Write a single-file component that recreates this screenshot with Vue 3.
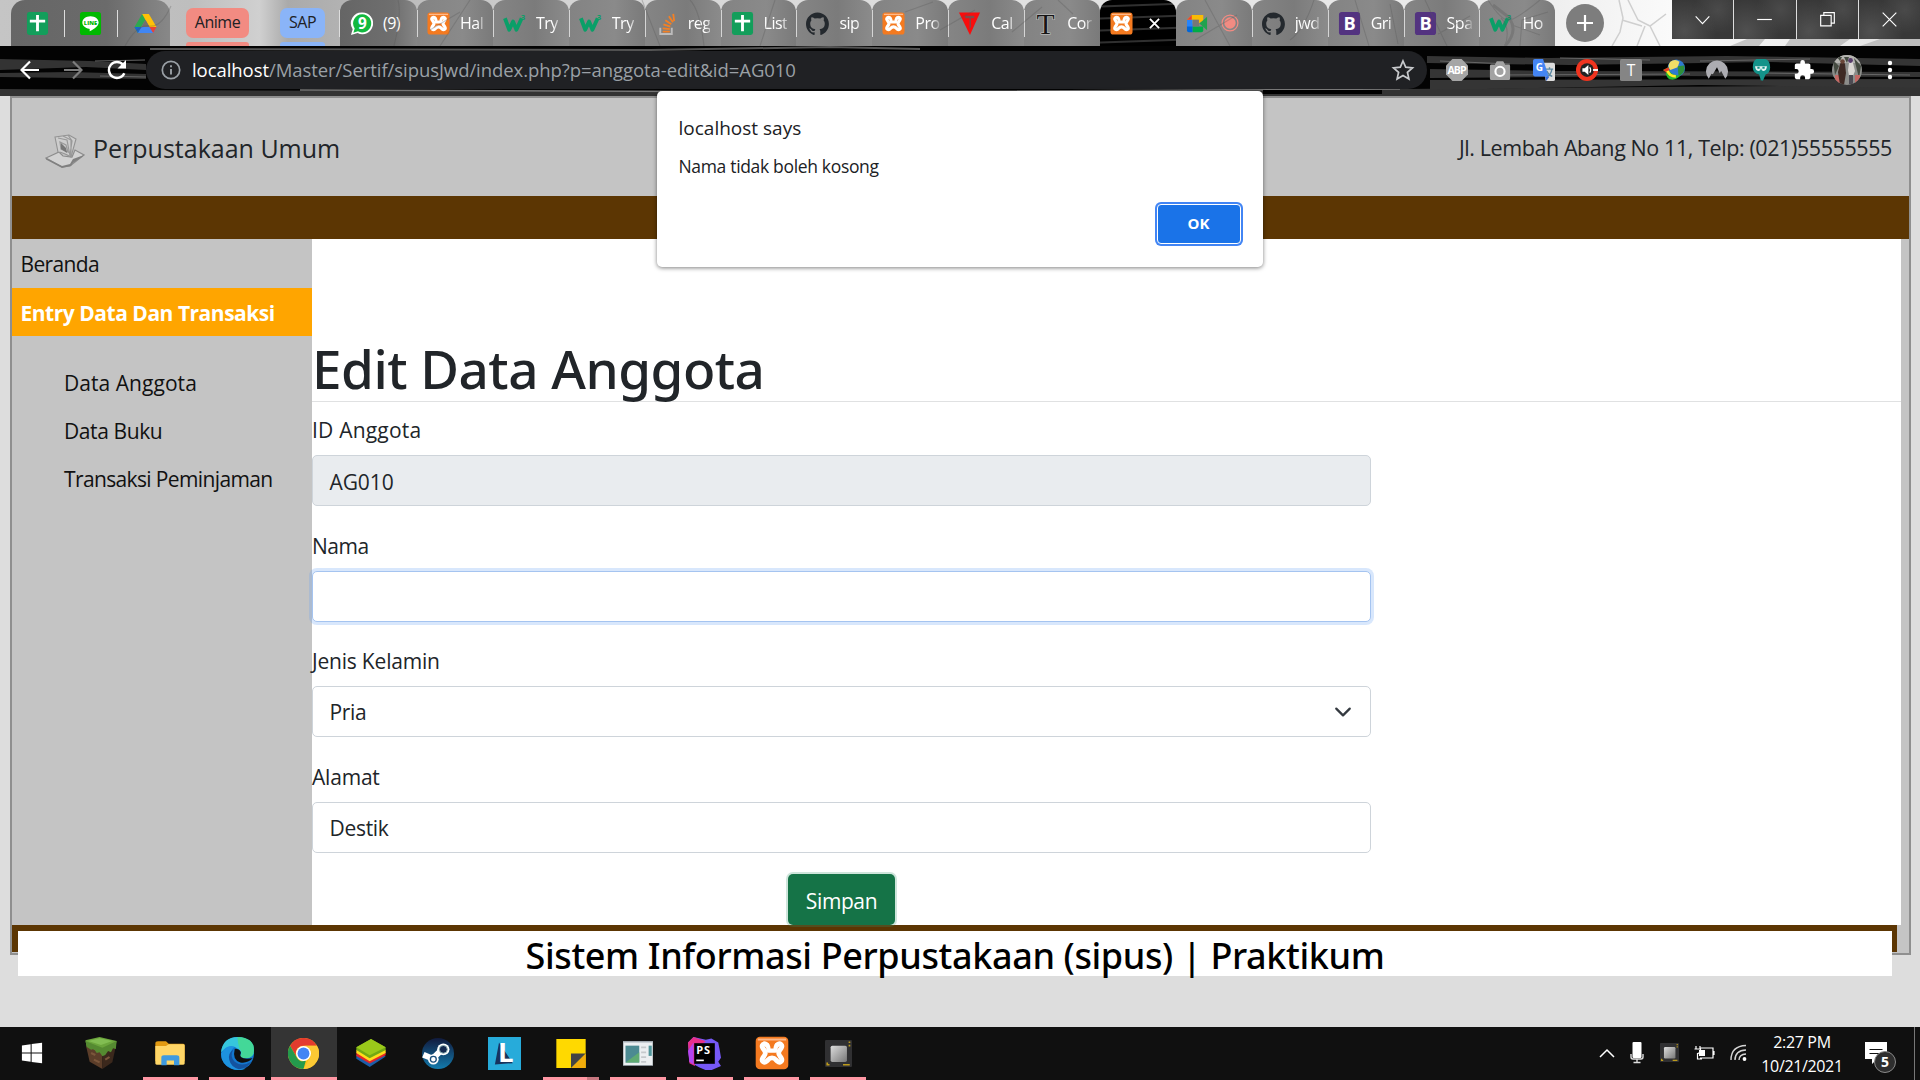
<script setup>
const xampp = '<rect x="0.5" y="0.5" width="23" height="23" rx="3" fill="#f47a20"/><path d="M2 2.5h20" stroke="#ffb98a" stroke-width="1.4"/><path d="M8.3 6.2c-2-1.6-4 .2-2.9 2.2.7 1.3 1.9 2.1 1.9 3.6s-1.200 2.300-1.900 3.600c-1.100 2 .9 3.800 2.900 2.200 1-.8 1.400-2.300 3.700-2.300s2.700 1.500 3.700 2.300c2 1.600 4-.2 2.900-2.200-.7-1.300-1.900-2.100-1.900-3.600s1.200-2.300 1.900-3.600c1.100-2-.9-3.800-2.900-2.200" fill="none" stroke="#fff" stroke-width="3.400" stroke-linecap="round"/><path d="M8.300 6.200c.9.700 1.300 2.600 1.200 4.200h5c-.1-1.600.3-3.500 1.200-4.200" fill="none" stroke="#fff" stroke-width="3" stroke-linecap="round" stroke-linejoin="round"/>'
const sheet = '<rect x="1" y="0" width="22" height="24" rx="2.500" fill="#139e5b"/><path d="M12 3v17M4 9.500h16" stroke="#fff" stroke-width="3"/>'
const w3 = '<path d="M2 6.500l4.500 12 4-8.500 3.500 8.500 5.500-12" fill="none" stroke="#0a9f68" stroke-width="4" stroke-linejoin="round"/><text x="18.500" y="8" font-size="8" font-weight="700" font-family="Open Sans" fill="#0a9f68">3</text>'
const github = '<path fill="#24292e" d="M12 .5C5.400.5 0 5.900 0 12.600c0 5.300 3.400 9.800 8.200 11.400.6.100.8-.3.8-.6v-2.200c-3.300.7-4-1.400-4-1.400-.6-1.400-1.300-1.800-1.300-1.800-1.100-.7.100-.7.100-.7 1.200.1 1.800 1.200 1.800 1.200 1.100 1.900 2.800 1.300 3.500 1 .1-.8.400-1.300.8-1.600-2.700-.3-5.500-1.300-5.500-5.900 0-1.300.5-2.400 1.200-3.200-.1-.3-.5-1.500.1-3.200 0 0 1-.3 3.300 1.200a11.500 11.500 0 0 1 6 0c2.300-1.500 3.300-1.200 3.300-1.200.7 1.700.2 2.900.1 3.200.8.800 1.200 1.900 1.200 3.200 0 4.600-2.800 5.600-5.500 5.900.4.400.8 1.100.8 2.200v3.300c0 .3.200.7.8.6 4.800-1.600 8.200-6.100 8.200-11.400C24 5.900 18.600.5 12 .5z"/>'
const boot = '<rect x="1" y="0" width="22" height="24" rx="3" fill="#533380"/><text x="12" y="19" text-anchor="middle" font-size="19" font-weight="700" font-family="Open Sans" fill="#fff">B</text>'
const icons = {
  xampp, sheet, w3, github, boot,
  line: '<rect x="1" y="0" width="22" height="24" rx="3" fill="#00b900"/><path d="M12 4.500c-4.800 0-8.500 2.900-8.500 6.500 0 3.300 3 6 7.100 6.400.9.200.6 1.200.5 2.800 2.700-1.300 9.400-5 9.400-9.200 0-3.600-3.700-6.500-8.500-6.500z" fill="#fff"/><text x="12" y="13.200" text-anchor="middle" font-size="6" font-weight="800" font-family="Open Sans" fill="#00b900">LINE</text>',
  drive: '<path d="M8.500 2h7l-8 13.500L4 22 .5 15.700z" fill="#2da94f"/><path d="M8.500 2h7L23.500 15.700h-7.500z" fill="#ffc107"/><path d="M7.800 15.700h15.700L20 22H4z" fill="#4086f4"/><path d="M16 15.700h7.500L20 22z" fill="#ea4335"/><path d="M.5 15.700h7.300L4 22z" fill="#1967d2"/><path d="M12 8l-4.300 7.700H16.300z" fill="#707070"/>',
  wa: '<path d="M13 .5a11 11.300 0 1 1-5 21.300L1 24l1.800-6A11.300 11.300 0 0 1 13 .5z" fill="#fff"/><path d="M13 2.300a9.300 9.500 0 1 1-4.700 17.800l-4.800 1.500 1.400-4.500A9.500 9.500 0 0 1 13 2.300z" fill="#12b93f"/><text x="13" y="18" text-anchor="middle" font-size="16" font-weight="700" font-family="Open Sans" fill="#fff">9</text>',
  stack: '<path d="M5.500 16.500v6.500h12v-6.500" fill="none" stroke="#bcbbbb" stroke-width="2"/><path d="M8 20.500h7.500M8 17l7.500.8M8.800 13l7.200 2.200M10.800 8.500l6.200 4.300M14.500 4.500l4.200 6.300M19 2l1 7.500" stroke="#f48024" stroke-width="1.900"/>',
  vee: '<path d="M1 .5h22L12.500 24z" fill="#f80d0d"/><path d="M7.500 4h9.500v2.500h-3.500v9l-1.500 3V6.500H7.500z" fill="#804a4a"/>',
  tee: '<text x="12" y="22.500" text-anchor="middle" font-size="31" font-weight="400" font-family="Liberation Serif" fill="#151515" stroke="#c9c9c9" stroke-width="1.200" paint-order="stroke">T</text>',
  meet: '<path d="M6 3h12v6l-5 3H1V8z" fill="#f9bb06"/><path d="M1 8h6v8H1z" fill="#2684fc"/><path d="M1 15h6v6H3q-2 0-2-2z" fill="#0066da"/><path d="M1 8l5-5v5z" fill="#e94235"/><path d="M7 15h11v4q0 2-2 2H7z" fill="#00ac47"/><path d="M14 12l8-7v14z" fill="#21a24e"/><path d="M7 8h6.500v7H7z" fill="#777"/>',
  rec: '<circle cx="12" cy="12" r="9.500" fill="none" stroke="#f28b82" stroke-width="1.500"/><circle cx="12" cy="12" r="6.800" fill="#f28b82"/>',
  abp: '<path d="M7 0h10l7 7v10l-7 7H7l-7-7V7z" fill="#a6a6a6"/><text x="12" y="16.500" text-anchor="middle" font-size="11.500" font-weight="700" font-family="Open Sans" textLength="21" fill="#fff">ABP</text>',
  camera: '<path d="M2.500 6h4l2-3.500h7l2 3.500h4q1.500 0 1.500 1.500v14q0 1.500-1.500 1.500h-19Q1 23 1 21.500v-14Q1 6 2.500 6z" fill="#a3a3a3"/><circle cx="12" cy="13.500" r="5" fill="none" stroke="#fff" stroke-width="2.300"/>',
  gtr: '<path d="M10 4h12q2 0 2 2v16q0 2-2 2h-8z" fill="#dcdcdc"/><path d="M14 11h8M18 9v2m-3 8c3-1 5-4 5.500-7.500M15 13c1 2.500 3.500 5 6 6" stroke="#5b87a0" stroke-width="1.500" fill="none"/><path d="M2 0h9l6 19H2q-2 0-2-2V2Q0 0 2 0z" fill="#4485f4"/><path d="M13 19h5l-3.500 5z" fill="#3367d6"/><text x="7" y="13.500" text-anchor="middle" font-size="11" font-weight="700" font-family="Open Sans" fill="#fff">G</text>',
  vol: '<circle cx="12" cy="12" r="12" fill="#f0341f"/><circle cx="12" cy="12" r="7.500" fill="#222"/><path d="M7 10h2.500l4-3.500v11l-4-3.500H7z" fill="#fff"/><path d="M15 9q2 3 0 6" stroke="#fff" stroke-width="1.300" fill="none"/><path d="M18.500 12h5.500" stroke="#fff" stroke-width="2"/>',
  tsq: '<rect x="0" y="0" width="24" height="24" rx="2" fill="#858585"/><text x="12" y="18" text-anchor="middle" font-size="17" font-family="Open Sans" fill="#fff">T</text>',
  idm: '<circle cx="14.500" cy="10" r="9.500" fill="#2f79cf"/><path d="M8 3q5-4 10 0l-2 6-8 3q-4-4 0-9z" fill="#f1df66"/><path d="M16 8l7-1q2 8-6 12z" fill="#2d8f3c"/><path d="M0 12l6-3 1 4q3 5 12 5-5 6-12 4-4-2-4-8z" fill="#26b531"/><path d="M0 12l6-3 1 3-3 3z" fill="#e83b20"/><path d="M5 13q2 6 9 6" stroke="#ffe928" stroke-width="3" fill="none"/>',
  nord: '<path d="M3 21.500A12 12 0 1 1 21 21.500L16.500 13l-1.500 2.500-3-6.500-4.500 7.500L6 16z" fill="#adadb2"/>',
  teal: '<path d="M7 0h10q5 2 5 9 0 6-5 8l-3 7-1-1-1 1-2-7q-7-2-7-8 0-7 4-9z" fill="#14938a"/><path d="M5.500 8q.5 5 3.500 5t3-4q0 4 3 4t3.500-5" fill="#e5f4f3"/><path d="M8 9.500h2.500M13.500 9.500H16" stroke="#14938a" stroke-width="2"/>',
  puzzle: '<path d="M20.500 11H19V7c0-1.100-.9-2-2-2h-4V3.500a2.500 2.500 0 0 0-5 0V5H4c-1.100 0-2 .9-2 2v3.800h1.500a2.700 2.700 0 0 1 0 5.400H2V20c0 1.100.9 2 2 2h3.800v-1.500a2.700 2.700 0 0 1 5.400 0V22H17c1.100 0 2-.9 2-2v-4h1.500a2.500 2.500 0 0 0 0-5z" fill="#fff"/>',
  win: '<path d="M1 3.700L10.500 2.400v9H1zM11.600 2.200L23 .7v10.700H11.600zM1 12.500h9.500v9L1 20.200zM11.600 12.500H23v10.800l-11.400-1.600z" fill="#fff"/>',
  mine: '<path d="M1 2.500L11 0l12 3-1 5-9 5-11-5z" fill="#6ba53c"/><path d="M3 3l8-2 9 2-8 3z" fill="#82bd52"/><path d="M1.500 7L13 12v12L4 18.500z" fill="#5b3d29"/><path d="M13 12l9.500-5L20 19l-7 5z" fill="#3b281c"/><path d="M1 3l12 5 10-5-.5 6-2-.5-1.500 3-2-1-2 3-2 1-2-3-2 .5-2-3-2 .5-3-2z" fill="#558a31"/><path d="M5 12l3 1.500M7 17l4 2M15 17l3-2" stroke="#7b563b" stroke-width="1.500"/>',
  folder: '<path d="M1 4q0-2 2-2h6l2 2h11q1 0 1 1.500V19H1z" fill="#e29a12"/><path d="M1 6h8l2-1.500h11q1 0 1 1V21q0 1-1 1H2q-1 0-1-1z" fill="#ffd667"/><path d="M5.500 22.500v-6.500q0-2 2-2h9.500q2 0 2 2v6.500h-4v-4h-5.500v4z" fill="#3f9ae0"/>',
  edge: '<circle cx="12" cy="12" r="12" fill="#1377cf"/><path d="M0 11Q1.500 0 12 0q12 .5 12 9.500 0 6-6 6-4 0-4-2 1.500-2-1-4.500Q7 4 0 11z" fill="#36c6dc"/><path d="M12 0q12 .5 12 9.500 0 6-6 6-4 0-4-2 2-2-.5-5Q12 4 12 0z" fill="#48dd82" opacity=".75"/><path d="M0 12Q4 5 10 7q-4 3-3 8 2 7 11 8-5 2-10 0-8-3-8-11z" fill="#1d92df"/><path d="M9 9q-3 5 1 9 5 4 12 0-3 5-9 5.500-6-2-7-7T9 9z" fill="#1453a0"/><path d="M10 8.500q4 0 4.500 3-1 1.500 0 3 2 2 8.500 1-4 4-9 3-6-2-4-10z" fill="#101010"/>',
  chrome: '<circle cx="12" cy="12" r="12" fill="#fbc116"/><path d="M1.600 6A12 12 0 0 1 22.400 6H12a6 6 0 0 0-5.200 9z" fill="#e33b2e"/><path d="M1.600 6l5.200 9a6 6 0 0 0 7 2.700L12 24A12 12 0 0 1 1.600 6z" fill="#249a4c"/><path d="M12 6h10.400A12 12 0 0 1 12 24l5.200-9a6 6 0 0 0-5.200-9z" fill="#fcc934"/><circle cx="12" cy="12" r="5.800" fill="#fff"/><circle cx="12" cy="12" r="4.600" fill="#4285f4"/>',
  blue: '<path d="M1 14l12-5 10 6-12 9L1 17z" fill="#1d5ea8"/><path d="M1 11.500l12-5 10 5V14l-12 7L1 14.500z" fill="#e4252b"/><path d="M1 9.500l12-5 10 5v2.500l-12 7L1 12z" fill="#ffdd1a"/><path d="M12 0l11 7v2.500l-12 7L1 9.500V7z" fill="#73a913"/><path d="M12 0l11 7-12 7L1 7z" fill="#9ac91a"/>',
  steam: '<defs><linearGradient id="st" x2="0" y2="1"><stop offset="0" stop-color="#111a3d"/><stop offset="1" stop-color="#137bad"/></linearGradient></defs><circle cx="12" cy="12" r="12" fill="url(#st)"/><path d="M1 13l7 3 7-7" fill="none" stroke="#fff" stroke-width="4.500"/><circle cx="16" cy="8.800" r="4.600" fill="#fff"/><circle cx="16" cy="8.800" r="3" fill="#14294f" stroke="#9bb" stroke-width=".7"/><circle cx="8.500" cy="16.500" r="4" fill="#fff"/><circle cx="8.500" cy="16.500" r="2.200" fill="none" stroke="#1b517e" stroke-width="1"/>',
  ell: '<rect width="24" height="24" fill="#27abda"/><path d="M8 4l-3 16 13-1z" fill="#17335d"/><text x="13" y="18" text-anchor="middle" font-size="20" font-weight="700" font-family="Open Sans" fill="#fff">L</text>',
  sticky: '<path d="M1 0h22v24H1z" fill="#ffd900"/><path d="M12 24L23 12v12z" fill="#f1ac0b"/><path d="M12 12h11L12 24z" fill="#444"/>',
  window: '<rect x="0" y="2" width="24" height="20" fill="#eceff1" stroke="#858e94" stroke-width=".7"/><path d="M0 2.500h24" stroke="#b5bdc4"/><rect x="2" y="5.500" width="11" height="14" fill="#4c8a92"/><path d="M2 19.500L13 11v8.500z" fill="#5faa72"/><path d="M14.500 7h4m-4 4h4m-4 4h4m-4 4h4" stroke="#c5c9cc" stroke-width="1.500"/><path d="M20.500 5.500H23V14h-2.500z" fill="#51959a"/>',
  ps: '<path d="M0 4l4-4 9 2 4-1 5 3 1 5 1 6-2 3 2 3-9 4-7-3-7-4z" fill="#7558f6"/><path d="M0 4l4-4 9 3-4 3-4 3v12l-4-2z" fill="#e8308b"/><path d="M0 10l4-6v16l-3-2z" fill="#b345f1"/><rect x="4.500" y="4.500" width="15" height="15" fill="#000"/><text x="6" y="12" font-size="8" font-weight="700" font-family="Open Sans" textLength="10" fill="#fff">PS</text><path d="M6 17h5.500" stroke="#fff" stroke-width="1.200"/>',
  chip: '<defs><linearGradient id="ch" x2="1" y2="1"><stop offset="0" stop-color="#ddd"/><stop offset="1" stop-color="#777"/></linearGradient></defs><rect width="24" height="24" rx="1" fill="#303032"/><path d="M2 20v2h2M16 22h6M21 2h1.500M21 5h1.500" stroke="#bd9b1c" stroke-width="1.500" fill="none"/><rect x="5" y="5" width="14.500" height="14.500" rx="1.500" fill="url(#ch)"/>',
}
const pinned = ['sheet', 'line', 'drive']
const tabs = [
  { i: 'wa', t: '(9)', first: true }, { i: 'xampp', t: 'Hal' }, { i: 'w3', t: 'Try' }, { i: 'w3', t: 'Try' },
  { i: 'stack', t: 'reg' }, { i: 'sheet', t: 'List' }, { i: 'github', t: 'sip' }, { i: 'xampp', t: 'Pro' },
  { i: 'vee', t: 'Cal' }, { i: 'tee', t: 'Cor', last: true }, { i: 'xampp', active: true }, { i: 'meet', rec: true },
  { i: 'github', t: 'jwd' }, { i: 'boot', t: 'Gri' }, { i: 'boot', t: 'Spa' }, { i: 'w3', t: 'Ho', last: true },
]
const extensions = ['abp', 'camera', 'gtr', 'vol', 'tsq', 'idm', 'nord', 'teal', 'puzzle']
const apps = [
  { i: 'win', w: 22, h: 22, cell: 64 }, { i: 'mine', w: 34, h: 32, cell: 73 }, { i: 'folder', w: 32, h: 28, run: true },
  { i: 'edge', w: 33, h: 33, run: true }, { i: 'chrome', w: 31, h: 31, run: true, on: true }, { i: 'blue', w: 32, h: 28 },
  { i: 'steam', w: 32, h: 31 }, { i: 'ell', w: 33, h: 33 }, { i: 'sticky', w: 32, h: 29, run: true, multi: true },
  { i: 'window', w: 30, h: 29, run: true }, { i: 'ps', w: 33, h: 33, run: true }, { i: 'xampp', w: 34, h: 34, run: true },
  { i: 'chip', w: 27, h: 27, run: true },
]
const submenu = ['Data Anggota', 'Data Buku', 'Transaksi Peminjaman']
</script>

<template>
  <div class="screen">
    <div class="strip">
      <svg class="texture" viewBox="0 0 1920 46" preserveAspectRatio="none">
        <defs>
          <linearGradient id="marble"><stop offset="0" stop-color="#c5c5c5" /><stop offset=".1" stop-color="#bebebe" /><stop offset=".135" stop-color="#d0d0d0" /><stop offset=".15" stop-color="#aaa" /><stop offset=".3" stop-color="#d5d5d5" /><stop offset=".8" stop-color="#ededed" /><stop offset=".87" stop-color="#fafafa" /><stop offset="1" stop-color="#e2e2e2" /></linearGradient>
        </defs>
        <rect width="1920" height="46" fill="url(#marble)" />
        <path d="M1612 46l8-14 3-14-4-18M1622 20l20 6M1628 0l10 20 12 6 16-12M1645 26l-8 20M1650 26l10 20" fill="none" stroke="#cfcfcf" stroke-width="1.500" />
        <path d="M1730 46l17-7h18l-6 7zM1785 46l5-7h60l-10 7zM1860 46l20-7h40v7z" fill="#999" opacity=".5" />
      </svg>
      <div class="tabrow">
        <div class="pinned">
          <div v-for="p in pinned" :key="p" class="pin"><svg viewBox="0 0 24 24" preserveAspectRatio="none" v-html="icons[p]" /></div>
        </div>
        <div class="groups">
          <div class="group anime">Anime</div>
          <div class="group sap">SAP</div>
        </div>
        <div v-for="(t, n) in tabs" :key="n" class="tab" :class="{ first: t.first, active: t.active, last: t.last }">
          <svg viewBox="0 0 24 24" preserveAspectRatio="none" v-html="icons[t.i]" />
          <span v-if="t.t" class="title">{{ t.t }}</span>
          <svg v-if="t.active" class="close" viewBox="0 0 12 12"><path d="M1 1l10 10M11 1L1 11" stroke="#fff" stroke-width="2" /></svg>
          <svg v-if="t.rec" class="rec" viewBox="0 0 24 24" v-html="icons.rec" />
        </div>
        <div class="plus"><svg viewBox="0 0 16 16"><path d="M8 0v16M0 8h16" stroke="#fff" stroke-width="2.200" /></svg></div>
      </div>
      <svg class="veins" viewBox="0 0 1920 46" preserveAspectRatio="none">
        <g fill="none" stroke="#555" stroke-width="1.100" opacity=".3">
          <path d="M125 46q12-22 24-20t22-20M398 0q4 14-4 46M440 46l30-46M430 30l30-18M642 0l18 46M690 0q10 10 14 46M775 0l-15 46M905 12l28-10M940 30l35-20M1012 32l30-25M1058 0l15 14M1195 40l42-25M1205 0l25 46M1290 40q14-10 24-40M1355 0l14 46M1390 4l8 40M1425 0l22 46M1438 34l32-18M1488 0q14 22 22 20t30-20M1505 46q6-18-4-28M1520 46l2-26 26-8M1512 25l28 10" />
          <path d="M1493 5l18 14M1510 19q8 13-5 27" stroke-width="3" />
        </g>
      </svg>
      <div class="wincontrols">
        <div><svg viewBox="0 0 20 20"><path d="M3.500 7L10 14l6.500-7" /></svg></div>
        <div><svg viewBox="0 0 20 20"><path d="M3 10h14" /></svg></div>
        <div><svg viewBox="0 0 20 20"><path d="M3.500 6h10v10h-10zM6.500 6V3.500h10v10h-3" /></svg></div>
        <div><svg viewBox="0 0 20 20"><path d="M3.500 3.500l13 13M16.500 3.500l-13 13" /></svg></div>
      </div>
    </div>

    <div class="toolbar">
      <svg class="texture" viewBox="0 0 1920 50" preserveAspectRatio="none">
        <defs><linearGradient id="streak"><stop offset="0" stop-color="#555" /><stop offset=".25" stop-color="#555" /><stop offset=".5" stop-color="#222" /><stop offset="1" stop-color="#4a4a4a" /></linearGradient></defs>
        <rect width="1920" height="50" fill="#030303" />
        <path d="M0 13l90 2 56 3v6l-60-3-86 3zM0 27l70-1 76 2v5l-146-2zM0 43l150 1 250 1h500l500-2 520-4v11H0z" fill="#333" />
        <path d="M1427 10l120 2 180-2 193 3v7l-150-4-200 3-143-2zM1430 23l130 2 360 1v5l-250-1-240 2zM1430 34l490-1v9l-220-3-270 5z" fill="#353535" />
        <path d="M1440 15l70 3M1560 12l90 2M1700 15l110-2M1500 29l190-1M1760 27l150 2M95 15l50-1M100 30l46 1" stroke="#666" stroke-width="1" />
        <path d="M150 3l500 1 180-3 90 2" fill="none" stroke="#555" stroke-width="2" />
        <path d="M300 44l500 2 600-3" fill="none" stroke="#777" stroke-width="1.500" />
        <path d="M0 49h1920" stroke="url(#streak)" stroke-width="2" />
        <path d="M1263 44h119v4h-119z" fill="#000" />
      </svg>
      <div class="nav">
        <svg viewBox="0 0 20 20"><path d="M19 10H2M10 1.500L1.500 10l8.500 8.500" fill="none" stroke="#fff" stroke-width="2.200" /></svg>
        <svg viewBox="0 0 20 20"><path d="M1 10h17M10 1.500l8.500 8.500-8.500 8.500" fill="none" stroke="#7d7d7d" stroke-width="2.200" /></svg>
        <svg viewBox="0 0 20 20"><path d="M17.300 13.200A8 8 0 1 1 16 4.800" fill="none" stroke="#fff" stroke-width="2.400" /><path d="M19 0v8.500h-8.500z" fill="#fff" /></svg>
      </div>
      <div class="omnibox">
        <svg class="info" viewBox="0 0 20 20"><circle cx="10" cy="10" r="8.700" fill="none" stroke="#9aa0a6" stroke-width="1.700" /><path d="M10 9v5.500M10 5.200v2" stroke="#9aa0a6" stroke-width="1.900" /></svg>
        <span class="url"><b>localhost</b>/Master/Sertif/sipusJwd/index.php?p=anggota-edit&amp;id=AG010</span>
        <svg class="star" viewBox="0 0 24 24"><path d="M12 3l2.700 6.200 6.800.6-5.100 4.500 1.500 6.600L12 17.400l-5.900 3.500 1.500-6.600-5.100-4.500 6.800-.6z" fill="none" stroke="#c8cacd" stroke-width="1.700" /></svg>
      </div>
      <div class="exts">
        <svg v-for="e in extensions" :key="e" viewBox="0 0 24 24" preserveAspectRatio="none" v-html="icons[e]" />
      </div>
      <svg class="avatar" viewBox="0 0 30 30"><defs><clipPath id="av"><circle cx="15" cy="15" r="15" /></clipPath></defs><g clip-path="url(#av)"><rect width="30" height="30" fill="#8c8d8a" /><path d="M0 0h30v8H0z" fill="#b5b4b0" /><path d="M1 5l6 6-4 9zM22 3l7 8-2 12zM12 2l3 6 2-6zM5 2l3 4 2-4z" fill="#454b41" /><path d="M3 20h5v10H3zM23 20h5v10h-5z" fill="#c46864" /><path d="M8 9q3-5 5 0l1 9-2 12H8L6 17z" fill="#3f2a24" /><path d="M17 8q3-4 4 0l2 8-2 5h-4l-1-6z" fill="#dad6d2" /><path d="M17 20h4v9h-4z" fill="#4c4a52" /><circle cx="10.500" cy="6.500" r="2.300" fill="#6a4638" /><circle cx="18.500" cy="5.500" r="2.400" fill="#573d6a" /></g></svg>
      <svg class="dots" viewBox="0 0 6 20"><circle cx="3" cy="3" r="2.200" /><circle cx="3" cy="10" r="2.200" /><circle cx="3" cy="17" r="2.200" /></svg>
    </div>

    <main class="page">
      <div class="container">
        <header>
          <svg class="logo" viewBox="0 0 40 34"><path d="M1 24l13-6 4 4 9 1 3-7 9 5-14 11-8 1z" fill="#d2d2d2" stroke="#8d8d8d" stroke-width="1.200" /><path d="M1 24l16 8 8-2 3-5 11-4-2 2-9 6-2 3-9 2L1 25.500z" fill="#808080" /><path d="M10 3l14-2 7 4-5 18q-9-5-13-5z" fill="#cdcdcd" stroke="#929292" stroke-width="1.100" /><path d="M13 4l9 2 3 16M18 2l8 4v16M23 1l4 6-2 14M15 8l6 3 2 7-7-3z" fill="none" stroke="#999" stroke-width="1.200" /><path d="M16 9l5 5 1 5-6-4z" fill="#777" /></svg>
          <span class="brand">Perpustakaan Umum</span>
          <span class="address">Jl. Lembah Abang No 11, Telp: (021)55555555</span>
        </header>
        <div class="band"></div>
        <div class="body">
          <aside>
            <div class="item">Beranda</div>
            <div class="item current">Entry Data Dan Transaksi</div>
            <ul>
              <li v-for="s in submenu" :key="s" :class="{ long: s.length > 15, short: s.length < 10 }">{{ s }}</li>
            </ul>
          </aside>
          <section>
            <h1>Edit Data Anggota</h1>
            <form @submit.prevent>
              <label class="wide">ID Anggota</label>
              <div class="input readonly">AG010</div>
              <label class="nama">Nama</label>
              <div class="input focus"></div>
              <label>Jenis Kelamin</label>
              <div class="input">Pria<svg viewBox="0 0 16 16"><path d="M2 5l6 6 6-6" fill="none" stroke="#343a40" stroke-width="2" stroke-linecap="round" stroke-linejoin="round" /></svg></div>
              <label>Alamat</label>
              <div class="input">Destik</div>
              <button type="button">Simpan</button>
            </form>
          </section>
        </div>
        <footer><div class="foot"><span>Sistem Informasi Perpustakaan (sipus) | Praktikum</span></div></footer>
      </div>
    </main>

    <div class="dialog">
      <div class="says">localhost says</div>
      <div class="msg">Nama tidak boleh kosong</div>
      <div class="ok">OK</div>
    </div>

    <div class="taskbar">
      <div v-for="a in apps" :key="a.i" class="app" :class="{ run: a.run, on: a.on, multi: a.multi }" :style="a.cell ? { width: a.cell + 'px' } : null">
        <svg :width="a.w" :height="a.h" viewBox="0 0 24 24" preserveAspectRatio="none" v-html="icons[a.i]" />
      </div>
      <div class="tray">
        <svg width="16" height="10" viewBox="0 0 16 10"><path d="M1 9l7-7 7 7" fill="none" stroke="#fff" stroke-width="1.500" /></svg>
        <svg width="14" height="22" viewBox="0 0 14 22"><rect x="2.500" y="0" width="9" height="16" rx="1" fill="#fff" /><path d="M1 12v3q0 2 2 2h8q2 0 2-2v-3M7 17v3M3.500 20.500h7" fill="none" stroke="#ddd" stroke-width="1.400" /></svg>
        <svg width="19" height="19" viewBox="0 0 24 24" v-html="icons.chip" />
        <svg width="21" height="14" viewBox="0 0 21 14"><path d="M6 2h13v10H6M20 5v4M2 0v3M6 0v3M0.500 3h6v2q0 2-3 2.500V13H8" fill="none" stroke="#fff" stroke-width="1.200" /><path d="M5 4h6v6H5z" fill="#fff" /></svg>
        <svg width="18" height="18" viewBox="0 0 18 18"><g fill="none" stroke="#d5d5d5" stroke-width="1.400"><path d="M1 16Q1 2 16 1.500" /><path d="M5 16Q5 6.500 16 6" /><path d="M9 16q0-5.500 7-6" /></g><circle cx="14.500" cy="15" r="1.900" fill="#fff" /></svg>
      </div>
      <div class="clock"><span>2:27 PM</span><span>10/21/2021</span></div>
      <div class="notify"><svg viewBox="0 0 22 22"><path d="M0 0h22v17H12l-5 5v-5H0z" fill="#fff" /><path d="M4.500 7.500h13M4.500 11.500h13" stroke="#111" stroke-width="1.100" /></svg><span class="badge">5</span></div>
      <div class="peek"></div>
    </div>
  </div>
</template>

<style>
html, body { margin: 0; overflow: hidden; background: #ddd; }
</style>
<style scoped>
* { box-sizing: border-box; }
svg { display: block; flex: none; }
.screen { position: relative; display: flex; flex-direction: column; width: 1920px; height: 1080px; overflow: hidden; background: #ddd; font-family: "Open Sans", "Noto Sans", sans-serif; }
.texture, .veins { position: absolute; left: 0; top: 0; width: 100%; height: 100%; pointer-events: none; }

.strip { position: relative; flex: none; display: flex; height: 46px; }
.tabrow { position: relative; flex: none; display: flex; width: 1672px; padding-left: 11px; }
.pinned { display: flex; width: 159px; border-radius: 14px 14px 0 0; background: linear-gradient(90deg, #666, #6b6b6b 60%, #888); }
.pin { width: 53px; display: flex; align-items: center; justify-content: center; position: relative; }
.pin:last-child svg { margin-left: 4px; }
.pin + .pin::before { content: ''; position: absolute; left: 0; top: 10px; height: 27px; width: 1px; background: #ddd; }
.pin svg, .tab > svg { width: 23px; height: 23px; }
.groups { display: flex; gap: 31px; width: 170px; padding: 8px 0 0 16px; }
.group { position: relative; height: 30px; border-radius: 7px; font-size: 16px; line-height: 29px; text-align: center; letter-spacing: -.5px; color: #202124; }
.group::after { content: ''; position: absolute; left: 0; right: 0; top: 34px; height: 4px; border-radius: 3px 3px 0 0; background: inherit; }
.anime { width: 63px; background: #f28b82; }
.sap { width: 45px; background: #8ab4f8; }
.tab { position: relative; display: flex; align-items: center; width: 75.900px; padding-left: 10px; background: linear-gradient(90deg, #858585, #7b7b7b 55%, #8b8b8b); border-radius: 12px 12px 0 0; }
.tab:nth-child(even) { background: linear-gradient(90deg, #838383, #8a8a8a 60%, #7a7a7a); }
.tab + .tab::before { content: ''; position: absolute; left: 0; top: 10px; height: 27px; width: 1px; background: #d5d5d5; }
.tab.first { width: 77px; background: linear-gradient(90deg, #656565, #6f6f6f 70%, #858585); }
.tab.first::before { content: ''; position: absolute; left: -1px; top: 10px; height: 27px; width: 1px; background: #ddd; }
.tab.active { background: repeating-linear-gradient(178deg, #000 0 5px, #303030 6px 7px, #000 8px 12px); }
.tab.active::before, .tab.active + .tab::before { display: none; }
.title { margin-left: 10px; white-space: nowrap; font-size: 16px; line-height: 24px; letter-spacing: -.5px; color: #fff; -webkit-mask-image: linear-gradient(90deg, #000 17px, transparent 27px); mask-image: linear-gradient(90deg, #000 17px, transparent 27px); }
.tab.first .title { -webkit-mask-image: none; mask-image: none; }
.tab .close { width: 11px; height: 11px; margin-left: 16px; }
.tab .rec { width: 20px; height: 20px; margin-left: 11px; }
.plus { display: flex; align-items: center; justify-content: center; width: 38px; height: 38px; margin: 4px 0 0 11px; border-radius: 50%; background: #7d7d7d; }
.plus svg { width: 16px; height: 16px; }
.wincontrols { position: relative; display: flex; gap: 1px; width: 248px; height: 39px; background: #ddd; }
.wincontrols div { flex: 1; display: flex; align-items: center; justify-content: center; background: radial-gradient(circle at 20% 80%, #505050, transparent 55%), radial-gradient(circle at 75% 25%, #4a4a4a, transparent 45%), #383838; }
.wincontrols svg { width: 21px; height: 21px; }
.wincontrols path { fill: none; stroke: #fff; stroke-width: 1.1; }

.toolbar { position: relative; flex: none; display: flex; align-items: center; height: 50px; padding-bottom: 2px; }
.nav { position: relative; display: flex; gap: 23px; width: 146px; padding-left: 20px; }
.nav svg { width: 20px; height: 20px; }
.nav svg:last-child { margin-left: 1px; }
.omnibox { position: relative; display: flex; align-items: center; width: 1281px; height: 38px; border-radius: 19px; background: #202124; }
.info { width: 20px; height: 20px; margin-left: 15px; }
.url { flex: 1; margin-left: 11px; font-size: 18.500px; line-height: 36px; letter-spacing: -.06px; color: #9aa0a6; white-space: nowrap; }
.url b { font-weight: 400; color: #fff; }
.star { width: 24px; height: 24px; margin-right: 12px; }
.exts { position: relative; display: flex; gap: 21.400px; padding-left: 19px; }
.exts svg { width: 22px; height: 22px; }
.avatar { position: relative; width: 30px; height: 30px; margin-left: 17px; }
.dots { position: relative; width: 6px; height: 20px; margin-left: 25px; fill: #fff; }

.page { flex: none; height: 931px; padding: 0 9px 0 10px; background: #ddd; }
.container { height: 859px; border: 2px solid #8f8f8f; background: #c4c4c4; color: #212529; font-size: 21px; }
header { display: flex; align-items: center; height: 98px; padding: 2px 17px 0 33px; }
.logo { width: 40px; height: 34px; margin-top: 5px; }
.brand { flex: 1; margin-left: 8px; font-size: 25px; line-height: 40px; }
.address { font-size: 21.500px; line-height: 40px; letter-spacing: -.41px; white-space: nowrap; }
.band { height: 43px; background: #5c3603; }
.body { display: flex; height: 686px; padding-right: 8px; }
aside { width: 300px; color: #111; }
.item { height: 49px; padding: 1px 0 0 8.500px; line-height: 49px; letter-spacing: -.65px; }
.item.current { height: 48px; line-height: 48px; background: #ffa500; color: #fff; font-weight: 700; letter-spacing: -.48px; }
ul { margin: 0; padding: 23px 0 0 52px; list-style: none; }
li { height: 48px; line-height: 48px; letter-spacing: .05px; }
li.long { letter-spacing: -.63px; }
li.short { letter-spacing: -.4px; }
section { flex: 1; background: #fff; }
h1 { height: 66px; margin: 97px 0 0; border-bottom: 1px solid #e0e1e2; font: 500 53px/66px "Noto Sans", sans-serif; letter-spacing: -.5px; white-space: nowrap; }
form { width: 1059px; padding-top: 12px; }
label { display: block; height: 33px; margin-bottom: 8px; line-height: 32px; letter-spacing: -.2px; }
label.wide { line-height: 33px; letter-spacing: .2px; }
label.nama { letter-spacing: -.5px; }
.input { display: flex; align-items: center; justify-content: space-between; height: 51px; margin-bottom: 23.700px; padding: 1px 16px 0 16.500px; border: 1px solid #ced4da; border-radius: 5px; background: #fff; letter-spacing: -.3px; }
.input.readonly { padding-top: 2px; background: #e9ecef; letter-spacing: -.1px; }
.input.focus { border-color: #a5c4f0; box-shadow: 0 0 0 3px rgba(100, 160, 245, .25); }
.input svg { width: 18px; height: 18px; margin: -1px 2px 0 0; }
button { display: block; width: 107px; height: 51px; margin: -2.500px auto 0; padding: 2px 0 0; border: 0; border-radius: 5px; background: #157347; box-shadow: 0 0 0 2px rgba(60, 153, 110, .25); color: #fff; font: 400 21px/48px "Open Sans", sans-serif; letter-spacing: -.4px; }
footer { width: 1885px; height: 27px; padding: 6px 5px 0 6px; background: #5c3603; }
.foot { height: 45px; background: #fff; display: flex; justify-content: center; position: relative; }
.foot span { font: 500 36px/49px "Noto Sans", sans-serif; letter-spacing: -.38px; color: #000; white-space: nowrap; }

.dialog { position: absolute; left: 657px; top: 91px; width: 606px; height: 176px; padding: 23px 20px 0 21.500px; border-radius: 5px; background: #fff; box-shadow: 0 1px 4px rgba(0, 0, 0, .5); color: #202124; }
.says { font-size: 19px; line-height: 28px; }
.msg { margin-top: 11px; font-size: 17.500px; line-height: 26px; letter-spacing: -.33px; }
.ok { width: 84px; height: 40px; margin: 25px 2.500px 0 auto; border: 1px solid #fff; border-radius: 4px; background: #1a73e8; box-shadow: 0 0 0 2px #4285f4; color: #fff; font-size: 15px; font-weight: 700; line-height: 36px; text-align: center; }

.taskbar { flex: none; display: flex; height: 53px; background: #101010; }
.app { position: relative; display: flex; align-items: center; justify-content: center; width: 66.800px; }
.app svg { margin-top: -1px; }
.app.run::after { content: ''; position: absolute; left: 5.500px; right: 5.500px; bottom: 0; height: 3px; background: #ff97a4; }
.app.on { background: #343434; }
.app.on::after { left: 0; right: 0; }
.app.multi::after { background: linear-gradient(90deg, #ff97a4 44px, #c87880 44px); }
.tray { display: flex; align-items: center; justify-content: space-between; width: 149px; margin: 0 0 2px auto; }
.clock { display: flex; flex-direction: column; align-items: center; width: 82px; margin-left: 13px; padding-top: 3px; font-size: 16px; line-height: 24px; letter-spacing: -.35px; color: #fff; }
.notify { position: relative; width: 22px; margin: 15px 0 0 22px; }
.notify svg { width: 22px; height: 22px; }
.badge { position: absolute; left: 9px; top: 9px; width: 22px; height: 22px; border: 1px solid #8a8a8a; border-radius: 50%; background: #2e2e2e; color: #fff; font-size: 14px; font-weight: 700; line-height: 19px; text-align: center; }
.peek { width: 1px; margin: 0 5px 0 27px; background: #777; }
</style>
